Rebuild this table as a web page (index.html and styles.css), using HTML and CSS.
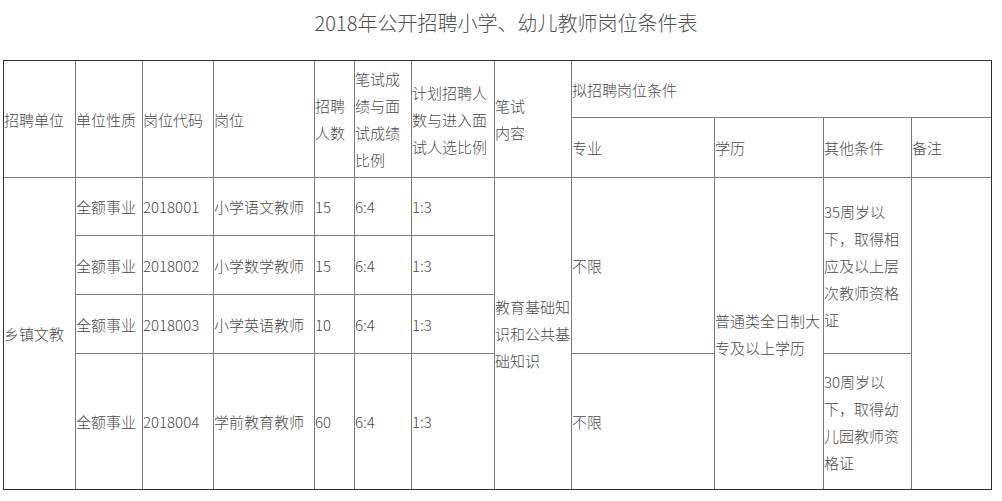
FILE: index.html
```html
<!DOCTYPE html>
<html lang="zh-CN">
<head>
<meta charset="utf-8">
<title>2018年公开招聘小学、幼儿教师岗位条件表</title>
<link rel="stylesheet" href="styles.css">
</head>
<body>
<div class="page">
  <h1 class="title">2018年公开招聘小学、幼儿教师岗位条件表</h1>
  <div class="sheet">
    <div class="cell c1 r-h">招聘单位</div>
    <div class="cell c2 r-h">单位性质</div>
    <div class="cell c3 r-h">岗位代码</div>
    <div class="cell c4 r-h">岗位</div>
    <div class="cell c5 r-h">招聘人数</div>
    <div class="cell c6 r-h">笔试成绩与面试成绩比例</div>
    <div class="cell c7 r-h">计划招聘人数与进入面试人选比例</div>
    <div class="cell c8 r-h">笔试<br>内容</div>
    <div class="cell c-cond last-col">拟招聘岗位条件</div>
    <div class="cell c9 r2">专业</div>
    <div class="cell c10 r2">学历</div>
    <div class="cell c11 r2">其他条件</div>
    <div class="cell c12 r2 last-col">备注</div>

    <div class="cell c1 r-body last-row">乡镇文教</div>

    <div class="cell c2 r3">全额事业</div>
    <div class="cell c3 r3">2018001</div>
    <div class="cell c4 r3">小学语文教师</div>
    <div class="cell c5 r3">15</div>
    <div class="cell c6 r3">6:4</div>
    <div class="cell c7 r3">1:3</div>
    <div class="cell c8 r-body last-row">教育基础知识和公共基础知识</div>
    <div class="cell c9 r-top3">不限</div>
    <div class="cell c10 r-body last-row">普通类全日制大专及以上学历</div>
    <div class="cell c11 r-top3">35周岁以下，取得相应及以上层次教师资格证</div>
    <div class="cell c12 r-body last-row last-col"></div>

    <div class="cell c2 r4">全额事业</div>
    <div class="cell c3 r4">2018002</div>
    <div class="cell c4 r4">小学数学教师</div>
    <div class="cell c5 r4">15</div>
    <div class="cell c6 r4">6:4</div>
    <div class="cell c7 r4">1:3</div>

    <div class="cell c2 r5">全额事业</div>
    <div class="cell c3 r5">2018003</div>
    <div class="cell c4 r5">小学英语教师</div>
    <div class="cell c5 r5">10</div>
    <div class="cell c6 r5">6:4</div>
    <div class="cell c7 r5">1:3</div>

    <div class="cell c2 r6 last-row">全额事业</div>
    <div class="cell c3 r6 last-row">2018004</div>
    <div class="cell c4 r6 last-row">学前教育教师</div>
    <div class="cell c5 r6 last-row">60</div>
    <div class="cell c6 r6 last-row">6:4</div>
    <div class="cell c7 r6 last-row">1:3</div>
    <div class="cell c9 r6 last-row">不限</div>
    <div class="cell c11 r6 last-row">30周岁以下，取得幼儿园教师资格证</div>
  </div>
</div>
</body>
</html>
```

FILE: styles.css
```css
html, body {
  margin: 0;
  padding: 0;
  background: #ffffff;
}

body {
  font-family: "Noto Sans CJK SC", "Noto Sans", sans-serif;
  color: #4a4a4a;
}

.page {
  padding: 0 0 0 3px;
}

.title {
  margin: 10px 0 0 0;
  padding-left: 7px;
  height: 50px;
  font-size: 20px;
  line-height: 26px;
  font-weight: 300;
  text-align: center;
  color: #505050;
}

.sheet {
  display: grid;
  width: 987px;
  grid-template-columns: 72px 67px 71px 101px 40px 57px 83px 77px 143px 109px 88px 79px;
  grid-template-rows: 57px 60px 58px 59px 59px 135px;
  border: 1px solid #2f2f2f;
}

.cell {
  box-sizing: border-box;
  display: flex;
  align-items: center;
  padding: 0;
  font-size: 15px;
  line-height: 27px;
  font-weight: 300;
  border-right: 1px solid #7d7d7d;
  border-bottom: 1px solid #7d7d7d;
  overflow: hidden;
  word-break: break-all;
}

.cell.last-col { border-right: none; }
.cell.last-row { border-bottom: none; }

.c1 { grid-column: 1; }
.c2 { grid-column: 2; }
.c3 { grid-column: 3; }
.c4 { grid-column: 4; }
.c5 { grid-column: 5; }
.c6 { grid-column: 6; }
.c7 { grid-column: 7; }
.c8 { grid-column: 8; }
.c9 { grid-column: 9; }
.c10 { grid-column: 10; }
.c11 { grid-column: 11; }
.c12 { grid-column: 12; }
.c-cond { grid-column: 9 / span 4; grid-row: 1; }

.r-h { grid-row: 1 / span 2; }
.r2 { grid-row: 2; }
.r3 { grid-row: 3; }
.r4 { grid-row: 4; }
.r5 { grid-row: 5; }
.r6 { grid-row: 6; }
.r-body { grid-row: 3 / span 4; }
.r-top3 { grid-row: 3 / span 3; }
```
